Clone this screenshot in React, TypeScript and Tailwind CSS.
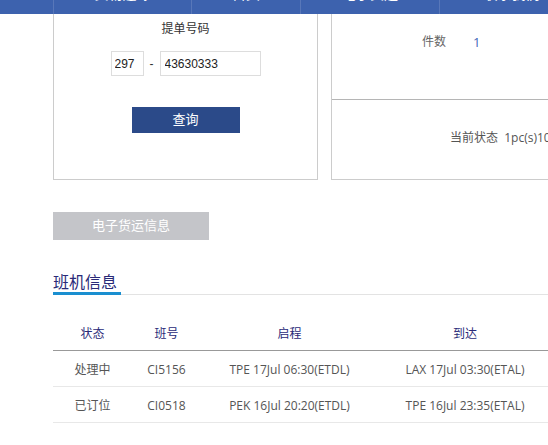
const navItems = [
  { label: "货物追踪", w: "w-[138px]" },
  { label: "首页", w: "w-[109px]" },
  { label: "电子货运", w: "w-[139px]" },
  { label: "联系我们", w: "w-[144px]" },
];

const flights = [
  { status: "处理中", no: "CI5156", dep: "TPE 17Jul 06:30(ETDL)", arr: "LAX 17Jul 03:30(ETAL)" },
  { status: "已订位", no: "CI0518", dep: "PEK 16Jul 20:20(ETDL)", arr: "TPE 16Jul 23:35(ETAL)" },
];

const cols = "grid grid-cols-[79px_69px_177px_174px_120px]";

export default function App() {
  return (
    <div className="h-[445px] w-[548px] overflow-hidden bg-white font-['Open_Sans','Noto_Sans_CJK_SC',sans-serif]">
      {/* top nav, scrolled mostly out of view */}
      <div className="flex h-[14px] overflow-hidden bg-[#3d62ae]">
        <div className="w-[53px] shrink-0" />
        {navItems.map((n) => (
          <div key={n.label} className={`${n.w} shrink-0 border-l border-[#5877b9] text-center`}>
            <div className="-mt-[15px] text-[14px] leading-[18px] text-white">{n.label}</div>
          </div>
        ))}
      </div>

      <div className="ml-[53px] w-[600px]">
        <div className="flex gap-[13px]">
          {/* waybill search */}
          <div className="flex h-[166px] w-[265px] flex-col items-center border-x border-b border-[#cccccc] pt-[7px]">
            <p className="text-[12px] leading-[16px] text-[#333]">提单号码</p>
            <div className="mt-[14px] flex items-center gap-[6px] font-['Liberation_Sans',Arial,sans-serif] text-[12px] text-[#222]">
              <input
                readOnly
                value="297"
                className="h-[25px] w-[33px] border border-[#dddddd] px-[3px] outline-none"
              />
              <span className="w-[4px] text-[#333]">-</span>
              <input
                readOnly
                value="43630333"
                className="h-[25px] w-[101px] border border-[#dddddd] px-[4px] outline-none"
              />
            </div>
            <button className="mt-[31px] h-[26px] w-[108px] bg-[#2b4a89] text-[13px] text-white">查询</button>
          </div>

          {/* summary */}
          <div className="w-[280px] border-x border-b border-[#cccccc]">
            <div className="h-[86px] border-b border-[#b5b5b5] pl-[90px] pt-[20px]">
              <div className="flex items-center text-[12px] leading-[16px]">
                <span className="w-[51px] text-[#666]">件数</span>
                <span className="text-[13px] text-[#3f68b8]">1</span>
              </div>
            </div>
            <div className="h-[79px] whitespace-nowrap pl-[118px] pt-[30px] text-[12px] leading-[16px] text-[#555]">
              当前状态&nbsp;&nbsp;1pc(s)100.0kg
            </div>
          </div>
        </div>

        <button className="mt-[32px] h-[28px] w-[156px] bg-[#c4c5c9] text-[13px] text-white">电子货运信息</button>

        {/* flight info */}
        <div className="mt-[32px] border-b border-[#e3e3e3]">
          <div className="-mb-px w-[68px] border-b-[3px] border-[#1a8fd0] text-[16px] leading-[20px] text-[#2a2a78]">
            班机信息
          </div>
        </div>

        <div className={`${cols} mt-[23px] h-[33px] items-center border-b border-[#999999] text-center text-[12px] text-[#2a2a78]`}>
          <span>状态</span>
          <span>班号</span>
          <span>启程</span>
          <span>到达</span>
          <span>航班状态</span>
        </div>
        {flights.map((f) => (
          <div
            key={f.no}
            className={`${cols} h-[36px] items-center border-b border-[#e8e8e8] pt-[2px] text-center text-[12px] text-[#555]`}
          >
            <span>{f.status}</span>
            <span>{f.no}</span>
            <span>{f.dep}</span>
            <span>{f.arr}</span>
            <span>—</span>
          </div>
        ))}
      </div>
    </div>
  );
}
